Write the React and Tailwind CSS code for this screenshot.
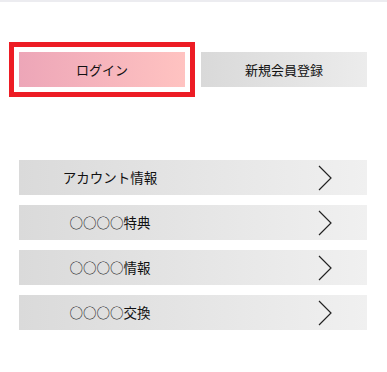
import React from "react";

const items = ["アカウント情報", "○○○○特典", "○○○○情報", "○○○○交換"];

function Chevron() {
  return (
    <svg width="14" height="26" viewBox="0 0 14 26" fill="none" className="shrink-0">
      <path d="M1 1 L13 13 L1 25" stroke="#222" strokeWidth="1.2" strokeLinejoin="miter" />
    </svg>
  );
}

export default function App() {
  return (
    <div
      className="w-[387px] h-[372px] bg-white border-t-2 border-[#ececf0] text-[#111]"
      style={{ fontFamily: '"Noto Sans CJK JP", "Noto Sans", sans-serif' }}
    >
      <div className="pt-[40px] pl-[9px] flex items-start">
        <div className="border-[5px] border-[#ed1c24] p-[5px]">
          <button className="w-[166px] h-[35px] flex items-center justify-center text-[13px] bg-gradient-to-r from-[#eda6b8] to-[#ffc3c1]">
            ログイン
          </button>
        </div>
        <button className="ml-[6px] mt-[10px] w-[166px] h-[35px] flex items-center justify-center text-[13px] bg-gradient-to-r from-[#d9d9d9] to-[#ececec]">
          新規会員登録
        </button>
      </div>

      <div className="mt-[63px] ml-[19px] w-[348px] flex flex-col gap-[10px]">
        {items.map((label) => (
          <div
            key={label}
            className="h-[35px] flex items-center bg-gradient-to-r from-[#dadada] to-[#f0f0f0]"
          >
            <div className="w-[182px] text-center text-[13.5px]">{label}</div>
            <div className="flex-1" />
            <div className="mr-[35px] flex items-center">
              <Chevron />
            </div>
          </div>
        ))}
      </div>
    </div>
  );
}
